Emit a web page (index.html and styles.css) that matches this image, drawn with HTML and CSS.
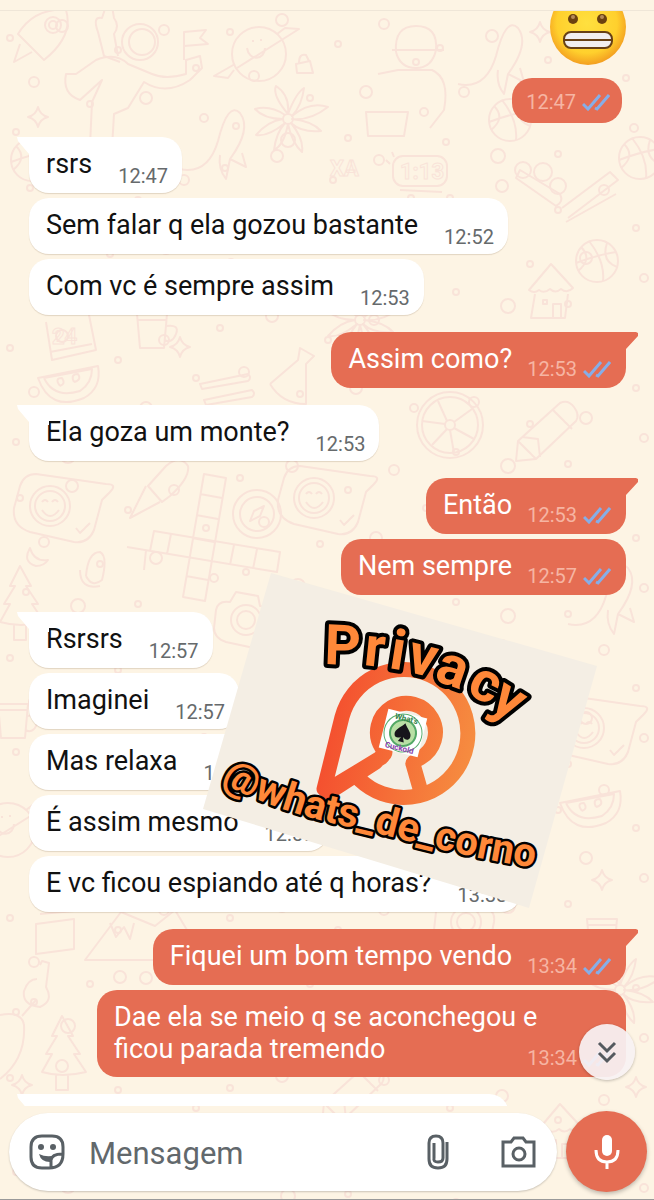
FILE: index.html
```html
<!DOCTYPE html>
<html lang="pt-BR">
  <head>
    <meta charset="utf-8" />
    <meta name="viewport" content="width=device-width, initial-scale=1.0" />
    <title>Conversa</title>
    <link rel="stylesheet" href="styles.css">
  </head>
  <body>
    <!-- doodle wallpaper -->
    <svg class="wallpaper" viewBox="0 0 654 1200" preserveAspectRatio="xMidYMin slice" aria-hidden="true">
      <defs>
        <path id="star" d="M0-10Q2-2 10 0Q2 2 0 10Q-2 2-10 0Q-2-2 0-10Z" />
        <g id="dots">
          <circle cx="10" cy="18" r="3" /><circle cx="62" cy="6" r="6" /><circle cx="118" cy="30" r="3" />
          <circle cx="164" cy="10" r="5" /><circle cx="196" cy="48" r="3" /><circle cx="34" cy="62" r="5" />
          <circle cx="90" cy="84" r="3" /><circle cx="146" cy="78" r="6" /><circle cx="204" cy="98" r="4" />
          <circle cx="16" cy="112" r="3" /><circle cx="68" cy="126" r="7" /><circle cx="128" cy="124" r="3" />
        </g>
        <g id="planet">
          <circle r="27" /><path d="M-24 10-45 22l14 2 6-8M-22 14 40-25 26-26 18-20M-12-6c2 14 18 12 18 0M-6-14v2M2-15v2" />
        </g>
        <g id="flower">
          <circle r="5" />
          <path d="M0-5Q-16-24-12-33Q2-24 0-5Q8-26 16-31Q14-14 4-3Q22-18 40-12Q22 2 4 0Q24 2 33 12Q14 14 3 4Q16 20 14 33Q4 24 0 5Q-4 26-14 31Q-12 14-3 4Q-20 18-32 16Q-20 2-5 0Q-24 0-33-10Q-18-14-3-4" />
        </g>
        <g id="bubble">
          <path d="M-46-22q4-12 16-12l70 10q12 0 4 8l-8 8-8 30q-6 14-20 12l-44-10q-18-6-16-24z" />
          <circle cx="-16" cy="-2" r="20" /><circle cx="-16" cy="-2" r="15" /><path d="M-24-6q3-4 6 0M-14-6q3-4 6 0M-24 2q8 12 17 0M10 20l4 5 10-10" />
        </g>
        <g id="pencil"><path d="M-28 28-26 8 16-30q8-4 14 4t2 14l-40 38zM-26 8l18 18M-22 4l16 2 2 18M8-24 28-4" /></g>
        <g id="melon"><path d="M-30-2 30-14q4 22-14 32-34 14-46-20zM-24-2 24-11q0 14-12 22-26 8-36-13M-8 6q-6-8 2-8 4 6-2 8M6 2q-4-8 4-8 4 6-4 8" /></g>
        <g id="astro">
          <path d="M-54 0l20-14q20-8 32 4l24 10q14 6 34 0v-14l14-4 2 12-12 12q-24 16-46 2l-16 26-14 6-2 34-22-2 2-44 10-22-22 20q-18-6-14-26z" />
          <circle cx="10" cy="-32" r="18" /><circle cx="12" cy="-32" r="13" /><path d="M-10-12-26-18-32-42q-6-16 4-14l4-12 6 0 2 12q6 8 0 16l4 22M54-14V-42l22-2-6 8 8 6-24 2" />
        </g>
        <g id="wheel"><circle r="33" /><circle r="28" /><circle r="5" /><path d="M-5-1-28-4M4-3 22-16M0 5 4 28M-3-4-12-24M4 3 24 14M-3 4-18 20" /></g>
        <g id="tree"><path d="M0-34-10-14h5L-16 4h6L-20 22q20 6 44 0L12 4h6L6-14h5ZM-6 24v16h12V24" /></g>
        <g id="mug"><path d="M-18-16h30l-3 34h-24zM-18-10h29M11-4q14-2 10 8t-12 6" /></g>
        <g id="ball"><circle r="21" /><path d="M-21 2Q0-6 19-9M-8-20Q8 0 6 20M-19 10Q-4-2-16-14M10-18Q4 0 20 6" /></g>
        <g id="hut"><path d="M-22 0 0-26 22-2q-6 6-12 1-6 5-11 0-6 5-11 1-5 4-10 0zM-16 4l-4 24h34l3-24M2 28V14h8v14M-8 10h4v4h-4z" /></g>
        <g id="whale"><path d="M-42 24Q-14 30-4-4 6-44 18-32 30-16 8 14L4 34Q-4 24-2 10M8 14l16 8-4-14" /></g>
        <g id="camera"><path d="M-34-8q2-10 14-8l6-10 22 4 2 10q16 0 14 14l-4 20q-4 10-16 8l-28-6q-12-4-12-14z" /><circle cx="-4" cy="2" r="15" /><circle cx="-4" cy="2" r="9" /></g>
      </defs>
      <use href="#dots" x="0" y="20" /><use href="#dots" x="220" y="14" /><use href="#dots" x="430" y="30" />
      <use href="#dots" x="20" y="170" /><use href="#dots" x="215" y="150" /><use href="#dots" x="440" y="180" />
      <use href="#dots" x="0" y="330" /><use href="#dots" x="210" y="310" /><use href="#dots" x="440" y="340" />
      <use href="#dots" x="10" y="480" /><use href="#dots" x="230" y="460" /><use href="#dots" x="440" y="490" />
      <use href="#dots" x="0" y="640" /><use href="#dots" x="440" y="640" /><use href="#dots" x="440" y="780" />
      <use href="#dots" x="0" y="900" /><use href="#dots" x="220" y="900" /><use href="#dots" x="440" y="940" />
      <use href="#dots" x="0" y="1060" /><use href="#dots" x="220" y="1070" /><use href="#dots" x="440" y="1090" />
      <use href="#star" x="38" y="117" /><use href="#star" x="540" y="32" /><use href="#star" x="180" y="347" />
      <use href="#star" x="602" y="880" /><use href="#star" x="22" y="1085" /><use href="#star" x="636" y="1087" />
      <use href="#astro" x="130" y="74" /><use href="#planet" x="259" y="54" /><use href="#flower" x="288" y="119" />
      <use href="#whale" x="222" y="145" /><use href="#bubble" x="66" y="508" /><use href="#pencil" x="544" y="433" />
      <use href="#melon" x="68" y="380" /><use href="#wheel" x="450" y="425" /><use href="#tree" x="62" y="1050" />
      <use href="#ball" x="597" y="261" /><use href="#ball" x="640" y="158" /><use href="#hut" x="551" y="290" />
      <use href="#camera" x="250" y="618" /><use href="#mug" x="155" y="330" /><use href="#whale" x="500" y="60" />
      <use href="#flower" x="620" y="990" /><use href="#hut" x="560" y="1130" /><use href="#ball" x="32" y="160" />
      <use href="#mug" x="605" y="935" /><use href="#bubble" x="600" y="730" /><use href="#camera" x="470" y="920" />
      <use href="#whale" x="610" y="600" /><use href="#melon" x="590" y="805" /><use href="#mug" x="16" y="720" />
      <use href="#planet" x="8" y="830" /><use href="#pencil" x="350" y="1095" /><use href="#tree" x="20" y="600" />
      <use href="#bubble" x="330" y="500" /><use href="#flower" x="360" y="320" /><use href="#ball" x="510" y="120" />
      <!-- rocket, cook, padlock, alarm clock -->
      <path d="M18 34Q34 8 66 10 74 36 44 60ZM18 34l26 26M20 44l-6 18 18-10M296 64l14-3 3 12-16 0zM299 63q0-10 7-8l3 6" />
      <circle cx="53" cy="25" r="8" /><circle cx="53" cy="25" r="4" />
      <path d="M396 52q-2-26 20-26t20 24q-4 18-20 18t-20-16M392 50h52M378 74l20-4h34q18 8 12 40l-14 18M366 112h42l-4 24h-36z" />
      <rect x="393" y="156" width="54" height="30" rx="10" /><path d="M400 190l42 2M386 160l4 4M392 152l2 5" />
      <path d="M562 208l48-36 8 8-50 38M566 222l50-28M516 178l40 28q8-4 4-12l-40-24z" />
      <circle cx="523" cy="170" r="8" /><circle cx="543" cy="172" r="9" /><circle cx="558" cy="186" r="8" />
      <!-- calendar, flask, sliders, crossword -->
      <path d="M46 322l6 38 44-10-8-40M50 352l42-8M270 384l28-24 2-12 14 8-8 8 0 40q-24 0-36-20M200 384l48-10q4 4 0 7l-46 8zM204 400l48-10q4 4 0 7l-46 8z" />
      <path d="M204 474l22 4-21 123-22-4zM200 494l22 4M196 515l22 4M192 538l22 4M186 576l22 4M127 547l150 25 3-20-126-21-4 20M171 534l-4 20M234 545l-4 20M257 549l-4 20M146 550l-2 20" />
      <path d="M166 466q14-12 22 0 2 12-18 30l-8 6-14-16zM146 486l-16 32 30-16M30 548q-8 14 6 18 8 0 12-6-14 2-18-12zM86 576q2-24 14-24 8 4 2 28-10 8-16-4M80 570q0 20 20 16" />
      <circle cx="257" cy="514" r="24" /><circle cx="257" cy="514" r="17" /><path d="M250 521l4-10 10-5-4 10z" />
      <!-- cabin, mountains, key, avocado -->
      <path d="M36 924l38-5v30l-38 5zM40 914l34-3M85 960l36-48 34 14 20-16 30 50zM110 923l6 14 8-10 6 12 4-16M40 965l2-4 7 2-3 24q8 14-6 20-18-2-16-16 4-12 13-12M22 1016l14-16M0 1015q22-4 24 10 2 34-24 54" />
      <circle cx="34" cy="1002" r="3" /><circle cx="120" cy="977" r="6" />
      <text x="52" y="344">24</text><text x="400" y="179">1:13</text><text x="330" y="176">XA</text>
    </svg>

    <header class="top-edge"></header>

    <main class="chat">
      <svg class="emoji" viewBox="0 0 78 55" role="img" aria-label="Careta">
        <defs>
          <radialGradient id="face" gradientUnits="userSpaceOnUse" cx="39" cy="12" r="43">
            <stop offset="0" stop-color="#ffe03f" /><stop offset=".7" stop-color="#ffd02d" /><stop offset="1" stop-color="#f29a1f" />
          </radialGradient>
        </defs>
        <circle cx="40" cy="16" r="38" fill="url(#face)" />
        <circle cx="25" cy="8" r="5" fill="#6b4110" /><circle cx="54" cy="8" r="5" fill="#6b4110" />
        <circle cx="25" cy="6" r="2" fill="#b58a58" /><circle cx="54" cy="6" r="2" fill="#b58a58" />
        <rect x="16" y="21" width="48" height="16" rx="7" fill="#f1eef0" stroke="#674016" stroke-width="2" />
        <path d="M17 29h46" stroke="#674016" stroke-width="2" />
      </svg>
      <div class="bubble sent only-time"><time>12:47</time><svg class="ticks" viewBox="0 0 28 18"><path d="M1 11l5 5L18 2M13 15l2 1L27 2" /></svg></div>

      <div class="group">
        <div class="bubble tail"><p>rsrs</p><time>12:47</time></div>
        <div class="bubble"><p>Sem falar q ela gozou bastante</p><time>12:52</time></div>
        <div class="bubble"><p>Com vc é sempre assim</p><time>12:53</time></div>
      </div>
      <div class="group">
        <div class="bubble sent tail"><p>Assim como?</p><time>12:53</time><svg class="ticks" viewBox="0 0 28 18"><path d="M1 11l5 5L18 2M13 15l2 1L27 2" /></svg></div>
      </div>
      <div class="group">
        <div class="bubble tail"><p>Ela goza um monte?</p><time>12:53</time></div>
      </div>
      <div class="group">
        <div class="bubble sent tail"><p>Então</p><time>12:53</time><svg class="ticks" viewBox="0 0 28 18"><path d="M1 11l5 5L18 2M13 15l2 1L27 2" /></svg></div>
        <div class="bubble sent"><p>Nem sempre</p><time>12:57</time><svg class="ticks" viewBox="0 0 28 18"><path d="M1 11l5 5L18 2M13 15l2 1L27 2" /></svg></div>
      </div>
      <div class="group">
        <div class="bubble tail"><p>Rsrsrs</p><time>12:57</time></div>
        <div class="bubble"><p>Imaginei</p><time>12:57</time></div>
        <div class="bubble"><p>Mas relaxa</p><time>12:57</time></div>
        <div class="bubble"><p>É assim mesmo</p><time>12:57</time></div>
        <div class="bubble"><p>E vc ficou espiando até q horas?</p><time>13:33</time></div>
      </div>
      <div class="group">
        <div class="bubble sent tail"><p>Fiquei um bom tempo vendo</p><time>13:34</time><svg class="ticks" viewBox="0 0 28 18"><path d="M1 11l5 5L18 2M13 15l2 1L27 2" /></svg></div>
        <div class="bubble sent long"><p>Dae ela se meio q se aconchegou e ficou parada tremendo</p><time>13:34</time><svg class="ticks" viewBox="0 0 28 18"><path d="M1 11l5 5L18 2M13 15l2 1L27 2" /></svg></div>
      </div>
      <div class="group">
        <div class="bubble tail next"></div>
      </div>

      <!-- sticker laid over the messages -->
      <svg class="sticker" viewBox="0 0 400 342">
        <defs>
          <linearGradient id="flame" gradientUnits="userSpaceOnUse" x1="130" y1="150" x2="275" y2="180">
            <stop offset="0" stop-color="#f4502f" /><stop offset="1" stop-color="#f68d40" />
          </linearGradient>
          <path id="handle-line" d="M21 212C60 234 110 249 150 257S260 288 345 299" />
        </defs>
        <path d="M71 3 397 96 329 338 3 239z" fill="#f4eee4" />
        <g fill="none" stroke="url(#flame)" stroke-width="15" stroke-linecap="round" stroke-linejoin="round">
          <path d="M124 219 142 147A64 64 0 1 1 160 210M126 221 182 187M128 223l48-31" />
          <path d="M182 186q6-4 0-8A29 29 0 1 1 220 188q-8 4-7 6l8 28" />
        </g>
        <g transform="translate(203 163) rotate(14)">
          <rect x="-20" y="-20" width="40" height="40" fill="#fff" />
          <circle r="19" fill="none" stroke="#5aaf70" stroke-width="1" />
          <circle r="13" fill="#b9dfa5" stroke="#53a866" stroke-width="2" />
          <path d="M0-10C3-5 9-2 8 3 7 7 3 6 1 4L3 9H-3L-1 4C-3 6-7 7-8 3-9-2-3-5 0-10Z" fill="#17151b" />
          <text class="badge-top" x="0" y="-12">What's</text>
          <text class="badge-bottom" x="0" y="18">Cuckold</text>
        </g>
        <text class="word" x="124 163 188 205 233 265 288" y="94 95 98 101 110 123 137" rotate="2 6 9 14 19 26 32">Privacy</text>
        <text class="account"><textPath href="#handle-line">@whats_de_corno</textPath></text>
      </svg>

      <button class="to-end" aria-label="Ir para o fim">
        <svg viewBox="0 0 24 24"><path d="M4 3l8 8 8-8M4 13l8 8 8-8" /></svg>
      </button>
    </main>

    <form class="composer">
      <div class="field">
        <button type="button" aria-label="Figurinhas">
          <svg viewBox="0 0 36 36"><path d="M13 2h10q11 0 11 11v7q0 14-14 14h-7Q2 34 2 23V13Q2 2 13 2zM33 20q-10 0-11 6v7" /><path class="solid" d="M10 20q8 4 17 1-6 2-6 7-9 0-11-8z" /><circle class="solid" cx="12" cy="13" r="3" /><circle class="solid" cx="24" cy="13" r="3" /></svg>
        </button>
        <input type="text" placeholder="Mensagem" aria-label="Mensagem" />
        <button type="button" aria-label="Anexar">
          <svg viewBox="0 0 36 36"><path d="M28 8v17q0 9-9 9t-9-9V9q0-7 7-7t7 7v15q0 4-5 4t-4-4V9" /></svg>
        </button>
        <button type="button" class="photo" aria-label="Câmera">
          <svg viewBox="0 0 36 36"><path d="M2 8h8l3-4h9l3 4h8v24H2z" /><circle cx="18" cy="20" r="6" /></svg>
        </button>
      </div>
      <button type="button" class="mic" aria-label="Gravar áudio">
        <svg viewBox="0 0 26 36"><rect x="8" y="1" width="10" height="21" rx="5" fill="#fff" /><path d="M2 16q0 12 11 12t11-12M13 28v7" fill="none" stroke="#fff" stroke-width="3" /></svg>
      </button>
    </form>
  </body>
</html>
```
FILE: styles.css
```css
* {
  box-sizing: border-box;
}
html {
  --sent: #e56d53;
  --paper: #fdf4e4;
  --icon: #596065;
}
body {
  position: relative;
  display: flex;
  flex-direction: column;
  height: 100vh;
  margin: 0;
  overflow: hidden;
  border-bottom: 1px solid #999;
  background: var(--paper);
  font-family: Roboto, sans-serif;
}
button {
  display: flex;
  align-items: center;
  justify-content: center;
  padding: 0;
  border: none;
  background: transparent;
  cursor: pointer;
}
.wallpaper {
  position: absolute;
  top: 0;
  left: 0;
  z-index: -1;
  width: 100%;
  height: 100%;
  fill: none;
  stroke: #f9e3d9;
  stroke-width: 2;
  stroke-linejoin: round;
}
.wallpaper text {
  font-size: 22px;
  font-weight: bold;
  stroke-width: 1;
}
.top-edge {
  flex: none;
  height: 11px;
  border-bottom: 1px solid #efe6d8;
  background: var(--paper);
}

/* messages */
.chat {
  position: relative;
  display: flex;
  flex: 1;
  flex-direction: column;
  min-height: 0;
  padding: 0 28px 0 29px;
  overflow: hidden;
}
.emoji {
  flex: none;
  align-self: flex-end;
  width: 78px;
  height: 55px;
  margin-bottom: 12px;
}
.group {
  display: flex;
  flex: none;
  flex-direction: column;
  gap: 5px;
  margin-bottom: 17px;
}
.bubble {
  position: relative;
  display: flex;
  flex: none;
  align-items: flex-end;
  align-self: flex-start;
  gap: 26px;
  min-height: 56px;
  padding: 11px 14px 5px 17px;
  border-radius: 20px;
  background: #fff;
  box-shadow: 0 1px 1px rgba(120, 90, 60, 0.2);
  color: #111;
}
.bubble p {
  align-self: flex-start;
  margin: 0;
  font-size: 27px;
  line-height: 32px;
}
.bubble time {
  color: #666a6c;
  font-size: 20px;
  line-height: 24px;
}
.sent {
  align-self: flex-end;
  gap: 6px;
  padding: 11px 15px 7px 17px;
  background: var(--sent);
  box-shadow: none;
  color: #fff;
}
.sent p {
  margin-right: 9px;
}
.sent time {
  color: #f6b5a3;
}
.ticks {
  flex: none;
  width: 28px;
  height: 18px;
  margin-bottom: 3px;
  fill: none;
  stroke: #86aee8;
  stroke-width: 3;
}
.only-time {
  align-items: center;
  min-height: 45px;
  margin: 0 4px 14px 0;
  padding: 6px 12px 4px 14px;
}
.only-time .ticks {
  margin-bottom: 0;
}
.tail::before {
  content: "";
  position: absolute;
  top: 0;
  left: -12px;
  width: 32px;
  height: 20px;
  background: #fff;
  clip-path: polygon(0 0, 100% 0, 100% 100%, 12px 100%, 12px 17px, 1px 4px);
}
.sent.tail::before {
  right: -12px;
  left: auto;
  background: var(--sent);
  clip-path: polygon(0 0, 30px 0, 32px 1px, 32px 4px, 20px 17px, 20px 100%, 0 100%);
}
.long {
  width: 529px;
  max-width: 100%;
}
.long p {
  width: 440px;
  padding-bottom: 5px;
}
.long time,
.long .ticks {
  position: absolute;
  right: 49px;
  bottom: 7px;
}
.long .ticks {
  right: 15px;
}
.next {
  width: 480px;
}

/* sticker */
.sticker {
  position: absolute;
  top: 559px;
  left: 200px;
  width: 400px;
  height: 342px;
}
.word,
.account {
  fill: #ff8839;
  stroke: #000;
  paint-order: stroke;
  stroke-linejoin: round;
  font-weight: bold;
}
.word {
  font-size: 56px;
  stroke-width: 8px;
}
.account {
  font-size: 40px;
  stroke-width: 5px;
}
.badge-top,
.badge-bottom {
  font-size: 8px;
  font-weight: bold;
  text-anchor: middle;
  fill: #35854a;
}
.badge-bottom {
  fill: #8a43ad;
}

.to-end {
  position: absolute;
  right: 19px;
  bottom: 26px;
  width: 56px;
  height: 56px;
  border-radius: 50%;
  background: rgba(247, 241, 243, 0.93);
  box-shadow: 0 1px 3px rgba(0, 0, 0, 0.25);
}
.to-end svg {
  width: 24px;
  height: 24px;
  fill: none;
  stroke: #555a5f;
  stroke-width: 3;
}

/* message box */
.composer {
  display: flex;
  flex: none;
  align-items: center;
  gap: 9px;
  padding: 5px 7px 7px 9px;
}
.field {
  display: flex;
  flex: 1;
  align-items: center;
  min-width: 0;
  height: 78px;
  padding: 0 20px;
  border-radius: 39px;
  background: #fff;
  box-shadow: 0 1px 2px rgba(0, 0, 0, 0.2);
}
.field svg {
  width: 36px;
  height: 36px;
  fill: none;
  stroke: var(--icon);
  stroke-width: 3;
}
.field .solid {
  fill: var(--icon);
  stroke: none;
}
.field input {
  flex: 1;
  min-width: 0;
  margin-left: 24px;
  padding: 4px 0 0;
  border: none;
  outline: none;
  background: transparent;
  font-family: inherit;
  font-size: 31px;
}
.field input::placeholder {
  color: #62686c;
  opacity: 1;
}
.photo {
  margin-left: 46px;
}
.mic {
  flex: none;
  width: 81px;
  height: 81px;
  border-radius: 50%;
  background: var(--sent);
  box-shadow: 0 2px 4px rgba(0, 0, 0, 0.25);
}
.mic svg {
  width: 26px;
  height: 36px;
}
```
